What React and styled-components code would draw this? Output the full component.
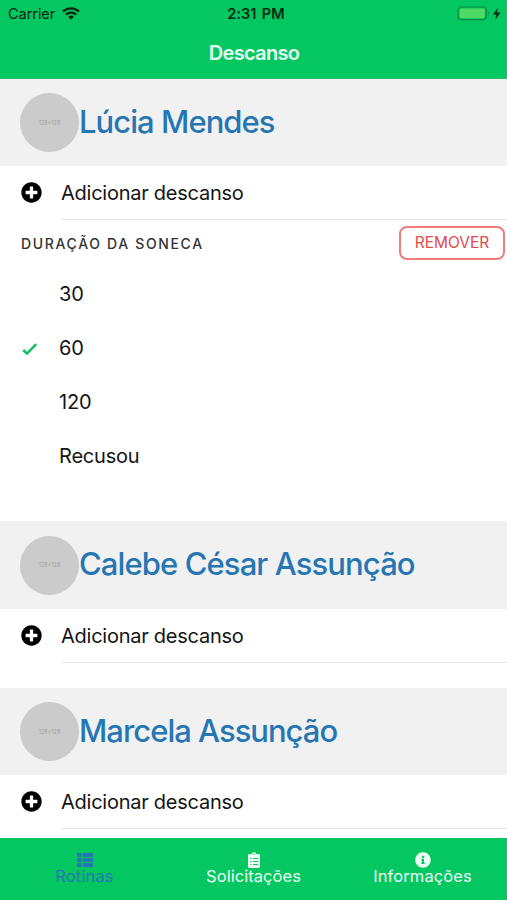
import styled, { createGlobalStyle } from "styled-components";
import {
  FaPlusCircle,
  FaThList,
  FaClipboardList,
  FaInfoCircle,
} from "react-icons/fa";

const GlobalStyle = createGlobalStyle`
  body {
    margin: 0;
    background-color: #ffffff;
    font-family: Inter, "Liberation Sans", sans-serif;
    color: #141414;
  }
`;

const Screen = styled.div`
  display: flex;
  flex-direction: column;
  width: 100%;
  height: 900px;
  overflow: hidden;
`;

const Header = styled.header`
  flex: none;
  height: 79px;
  box-sizing: border-box;
  background-color: #04c762;
  border-bottom: 1px solid #27bd6c;
`;

const StatusBar = styled.div`
  display: grid;
  grid-template-columns: 1fr auto 1fr;
  align-items: center;
  height: 27px;
  padding: 0 6px 0 8px;
  color: #04280f;
  font-size: 14px;
`;

const Carrier = styled.div`
  display: flex;
  align-items: center;
  gap: 7px;
  font-size: 14.5px;
  letter-spacing: -0.05px;
`;

const Time = styled.div`
  padding-left: 3px;
  font-size: 14.5px;
  font-weight: 600;
  letter-spacing: 0.1px;
  word-spacing: 1.5px;
`;

const Power = styled.div`
  display: flex;
  align-items: center;
  justify-content: flex-end;
`;

const Title = styled.h1`
  margin: 0;
  padding-left: 1px;
  line-height: 52px;
  text-align: center;
  color: #e4fff0;
  font-size: 20px;
  font-weight: 600;
  letter-spacing: -0.7px;
`;

const List = styled.main`
  flex: 1;
  min-height: 0;
  overflow: hidden;
`;

const Section = styled.section`
  margin-bottom: ${(props) => props.$gap}px;
`;

const PersonBar = styled.div`
  display: flex;
  align-items: center;
  height: ${(props) => props.$height}px;
  box-sizing: border-box;
  padding: 0 20px;
  background-color: #f1f1f1;
`;

const Avatar = styled.div`
  display: flex;
  align-items: center;
  justify-content: center;
  flex: none;
  width: 59px;
  height: 59px;
  border-radius: 50%;
  background-color: #cbcbcb;
  color: #a0a0a0;
  font-size: 5.5px;
`;

const PersonName = styled.h2`
  margin: 0 0 2px;
  color: #2676b3;
  font-size: 31px;
  font-weight: 500;
  line-height: 40px;
  white-space: nowrap;
  letter-spacing: ${(props) => props.$spacing}px;
`;

const AddRow = styled.div`
  display: flex;
  align-items: center;
  height: 54px;
  padding-left: 20.5px;
  color: #000000;

  svg {
    margin-bottom: 1px;
  }
`;

const AddLabel = styled.div`
  flex: 1;
  height: 54px;
  box-sizing: border-box;
  margin-left: 19.5px;
  border-bottom: 1px solid #e6e6e6;
  line-height: 54px;
  color: #141414;
  font-size: 20px;
  letter-spacing: -0.25px;
`;

const NapHeader = styled.div`
  display: flex;
  align-items: center;
  justify-content: space-between;
  height: 47px;
  box-sizing: border-box;
  padding: 0 2px 1px 21px;
`;

const NapTitle = styled.div`
  color: #333333;
  font-size: 14px;
  font-weight: 500;
  letter-spacing: 1.65px;
`;

const RemoveButton = styled.button`
  width: 106px;
  height: 34px;
  padding: 0 0 1px;
  border: 2px solid #ee7d7d;
  border-radius: 8px;
  background-color: #ffffff;
  color: #e34a4a;
  font-family: inherit;
  font-size: 15.5px;
  letter-spacing: 0;
`;

const Option = styled.div`
  display: flex;
  align-items: center;
  height: 53.8px;
  box-sizing: border-box;
  padding: 1px 0 0 21px;
  font-size: 20px;
  letter-spacing: -0.2px;
`;

const OptionMark = styled.div`
  display: flex;
  width: 38px;
  padding-top: 1px;
`;

const TabBar = styled.nav`
  display: grid;
  grid-template-columns: repeat(3, 1fr);
  flex: none;
  height: 62px;
  background-color: #04c762;
`;

const Tab = styled.div`
  display: flex;
  flex-direction: column;
  align-items: center;
  padding-top: 14px;
  color: ${(props) => (props.$active ? "#2676b3" : "#e9fff3")};
  font-size: 16.5px;
  line-height: 16px;
  letter-spacing: ${(props) => props.$spacing}px;
`;

const WifiIcon = () => (
  <svg width="18" height="13" viewBox="0 0 18 13" fill="none">
    <path d="M1 4.7a11.5 11.5 0 0 1 16 0" stroke="#04280f" strokeWidth="2.3" />
    <path d="M3.8 7.7a7.5 7.5 0 0 1 10.4 0" stroke="#04280f" strokeWidth="2.1" />
    <path d="M9 12.6 6.1 9.9a4.1 4.1 0 0 1 5.8 0z" fill="#04280f" />
  </svg>
);

const BatteryIcon = () => (
  <svg width="44" height="15" viewBox="0 0 44 15" fill="none">
    <rect x="1.2" y="1" width="28" height="12.6" rx="3" stroke="#078a45" strokeWidth="1.2" />
    <rect x="2.6" y="2.4" width="25.2" height="9.8" rx="1.8" fill="#4cd964" />
    <path d="M30.8 5.6c1.5.5 1.5 3 0 3.6z" fill="#078a45" />
    <path d="M41 1.6 36 8.4h3.4l-1.1 5.4 5.2-7.2h-3.7z" fill="#04280f" />
  </svg>
);

const CheckIcon = () => (
  <svg width="17" height="14" viewBox="0 0 17 14" fill="none">
    <path d="M2.2 8 6 11.6 15.2 2.2" stroke="#0fbf63" strokeWidth="2.5" />
  </svg>
);

const options = ["30", "60", "120", "Recusou"];

const people = [
  { name: "Lúcia Mendes", height: 87, gap: 39, spacing: -0.95, nap: "60" },
  { name: "Calebe César Assunção", height: 88, gap: 25, spacing: -0.9 },
  { name: "Marcela Assunção", height: 87, gap: 0, spacing: -1 },
];

const tabs = [
  { text: "Rotinas", icon: FaThList, spacing: 0.15, active: true },
  { text: "Solicitações", icon: FaClipboardList, spacing: 0.05 },
  { text: "Informações", icon: FaInfoCircle, spacing: 0.1 },
];

const NapOptions = ({ selected }) => {
  return (
    <>
      <NapHeader>
        <NapTitle>DURAÇÃO DA SONECA</NapTitle>
        <RemoveButton>REMOVER</RemoveButton>
      </NapHeader>
      {options.map((option) => (
        <Option key={option}>
          <OptionMark>{option === selected && <CheckIcon />}</OptionMark>
          {option}
        </Option>
      ))}
    </>
  );
};

const Person = ({ name, height, gap, spacing, nap }) => {
  return (
    <Section $gap={gap}>
      <PersonBar $height={height}>
        <Avatar>128×128</Avatar>
        <PersonName $spacing={spacing}>{name}</PersonName>
      </PersonBar>
      <AddRow>
        <FaPlusCircle size={21} />
        <AddLabel>Adicionar descanso</AddLabel>
      </AddRow>
      {nap && <NapOptions selected={nap} />}
    </Section>
  );
};

const App = () => {
  return (
    <>
      <GlobalStyle />
      <Screen>
        <Header>
          <StatusBar>
            <Carrier>
              Carrier
              <WifiIcon />
            </Carrier>
            <Time>2:31 PM</Time>
            <Power>
              <BatteryIcon />
            </Power>
          </StatusBar>
          <Title>Descanso</Title>
        </Header>
        <List>
          {people.map((person) => (
            <Person key={person.name} {...person} />
          ))}
        </List>
        <TabBar>
          {tabs.map(({ text, icon: Icon, spacing, active }) => (
            <Tab key={text} $active={active} $spacing={spacing}>
              <Icon size={16} />
              {text}
            </Tab>
          ))}
        </TabBar>
      </Screen>
    </>
  );
};

export default App;
